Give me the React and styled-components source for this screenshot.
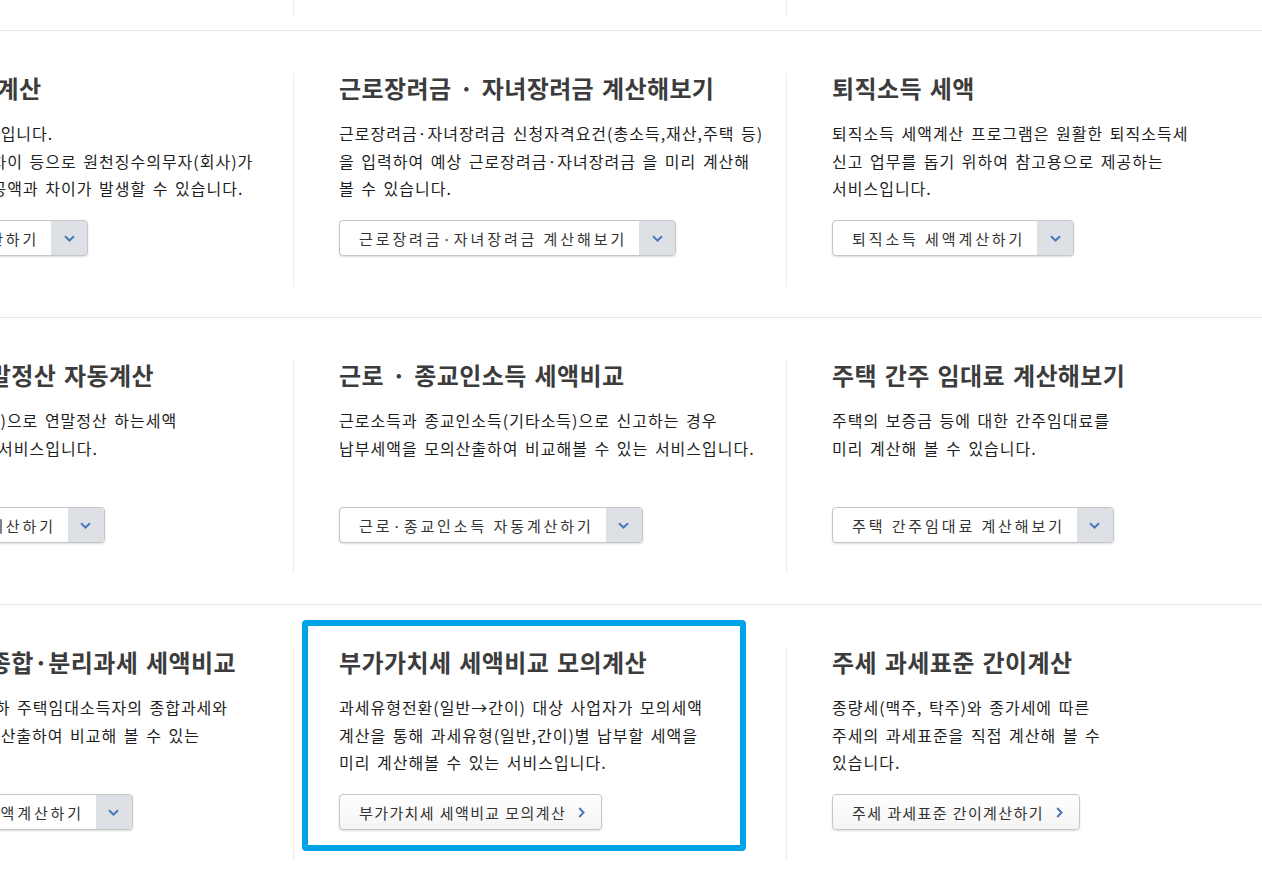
import React from 'react';
import styled, { createGlobalStyle } from 'styled-components';

const rows = [
  [
    {
      title: '원천징수 세액 계산',
      lines: [
        '세액 조회하는 서비스입니다.',
        '실제 부양가족 수의 차이 등으로 원천징수의무자(회사)가',
        '연말정산 시 결정된 공액과 차이가 발생할 수 있습니다.',
      ],
      button: '원천징수세액 계산하기',
      type: 'select',
    },
    {
      title: '근로장려금 · 자녀장려금 계산해보기',
      lines: [
        '근로장려금·자녀장려금 신청자격요건(총소득,재산,주택 등)',
        '을 입력하여 예상 근로장려금·자녀장려금 을 미리 계산해',
        '볼 수 있습니다.',
      ],
      button: '근로장려금·자녀장려금 계산해보기',
      type: 'select',
    },
    {
      title: '퇴직소득 세액',
      lines: [
        '퇴직소득 세액계산 프로그램은 원활한 퇴직소득세',
        '신고 업무를 돕기 위하여 참고용으로 제공하는',
        '서비스입니다.',
      ],
      button: '퇴직소득 세액계산하기',
      type: 'select',
    },
  ],
  [
    {
      title: '근로소득자 연말정산 자동계산',
      lines: [
        '입력 자료(간소화자료)으로 연말정산 하는세액',
        '을 계산해볼 수 있는 서비스입니다.',
      ],
      button: '근로소득자 자동계산하기',
      type: 'select',
    },
    {
      title: '근로 · 종교인소득 세액비교',
      lines: [
        '근로소득과 종교인소득(기타소득)으로 신고하는 경우',
        '납부세액을 모의산출하여 비교해볼 수 있는 서비스입니다.',
      ],
      button: '근로·종교인소득 자동계산하기',
      type: 'select',
    },
    {
      title: '주택 간주 임대료 계산해보기',
      lines: ['주택의 보증금 등에 대한 간주임대료를', '미리 계산해 볼 수 있습니다.'],
      button: '주택 간주임대료 계산해보기',
      type: 'select',
    },
  ],
  [
    {
      title: '주택임대소득 종합·분리과세 세액비교',
      lines: [
        '수입금액 2천만원 이하 주택임대소득자의 종합과세와',
        '분리과세 세액을 모의산출하여 비교해 볼 수 있는',
        '서비스입니다.',
      ],
      button: '종합·분리과세 세액계산하기',
      type: 'select',
    },
    {
      title: '부가가치세 세액비교 모의계산',
      lines: [
        '과세유형전환(일반→간이) 대상 사업자가 모의세액',
        '계산을 통해 과세유형(일반,간이)별 납부할 세액을',
        '미리 계산해볼 수 있는 서비스입니다.',
      ],
      button: '부가가치세 세액비교 모의계산',
      type: 'link',
      active: true,
    },
    {
      title: '주세 과세표준 간이계산',
      lines: [
        '종량세(맥주, 탁주)와 종가세에 따른',
        '주세의 과세표준을 직접 계산해 볼 수',
        '있습니다.',
      ],
      button: '주세 과세표준 간이계산하기',
      type: 'link',
    },
  ],
];

const ChevronDown = () => (
  <svg width="11" height="7" viewBox="0 0 11 7" fill="none">
    <path d="M1 1.2L5.5 5.5L10 1.2" stroke="#4a78b8" strokeWidth="2" />
  </svg>
);

const ChevronRight = () => (
  <svg width="7" height="11" viewBox="0 0 7 11" fill="none">
    <path d="M1.2 1L5.5 5.5L1.2 10" stroke="#4a78b8" strokeWidth="2" />
  </svg>
);

const Card = ({ item }) => (
  <Cell>
    {item.active && <Highlight />}
    <Title>{item.title}</Title>
    <Desc>
      {item.lines.map((line, i) => (
        <React.Fragment key={i}>
          {line}
          {i < item.lines.length - 1 && <br />}
        </React.Fragment>
      ))}
    </Desc>
    {item.type === 'select' ? (
      <Select>
        <SelectLabel>{item.button}</SelectLabel>
        <Toggle>
          <ChevronDown />
        </Toggle>
      </Select>
    ) : (
      <LinkButton>
        {item.button}
        <ChevronRight />
      </LinkButton>
    )}
  </Cell>
);

const App = () => (
  <Page>
    <GlobalStyle />
    <Board>
      <TailRow>
        <TailCell />
        <TailCell />
        <TailCell />
      </TailRow>
      {rows.map((row, r) => (
        <Row key={r}>
          {row.map((item, c) => (
            <Card key={c} item={item} />
          ))}
        </Row>
      ))}
    </Board>
  </Page>
);

const GlobalStyle = createGlobalStyle`
  body {
    margin: 0;
    background: #fff;
    overflow: hidden;
    font-family: "Noto Sans CJK KR", "Noto Sans", sans-serif;
    color: #222;
  }
`;

const Page = styled.div`
  width: 1262px;
  height: 881px;
  overflow: hidden;
`;

const Board = styled.div`
  margin-left: -200px;
  width: 1479px;
`;

const TailRow = styled.div`
  display: grid;
  grid-template-columns: repeat(3, 493px);
  height: 30px;
`;

const TailCell = styled.div`
  height: 16px;
  border-left: 1px solid #ececec;
`;

const Row = styled.div`
  display: grid;
  grid-template-columns: repeat(3, 493px);
  border-top: 1px solid #e6e6e6;
  padding: 42px 0 31px;
`;

const Cell = styled.div`
  position: relative;
  height: 213px;
  box-sizing: border-box;
  border-left: 1px solid #ececec;
  padding-left: 45px;
`;

const Highlight = styled.div`
  position: absolute;
  left: 8px;
  top: -27px;
  width: 444px;
  height: 231px;
  box-sizing: border-box;
  border: 6px solid #00a3e8;
  border-radius: 4px;
  pointer-events: none;
`;

const Title = styled.h3`
  margin: 0;
  font-size: 24px;
  line-height: 30px;
  font-weight: 700;
  letter-spacing: 0.4px;
  word-spacing: 2px;
  color: #3c3c3c;
  white-space: nowrap;
`;

const Desc = styled.p`
  margin: 17px 0 0;
  height: 83px;
  font-size: 16px;
  line-height: 27.5px;
  letter-spacing: 1px;
  word-spacing: 2px;
  color: #1e1e1e;
  white-space: nowrap;
`;

const Select = styled.div`
  display: inline-flex;
  margin-top: 17px;
  height: 36px;
  box-sizing: border-box;
  border: 1px solid #c6c6c6;
  border-radius: 4px;
  overflow: hidden;
  background: #fff;
  box-shadow: 0 1px 2px rgba(0, 0, 0, 0.14);
`;

const SelectLabel = styled.span`
  display: flex;
  align-items: center;
  padding: 0 12px 0 19px;
  font-size: 15px;
  letter-spacing: 2.9px;
  color: #333;
  white-space: nowrap;
`;

const Toggle = styled.span`
  display: flex;
  align-items: center;
  justify-content: center;
  width: 36px;
  background: #dde1e6;
`;

const LinkButton = styled.div`
  display: inline-flex;
  align-items: center;
  gap: 12px;
  margin-top: 17px;
  height: 36px;
  box-sizing: border-box;
  padding: 0 16px 0 19px;
  border: 1px solid #c6c6c6;
  border-radius: 4px;
  background: linear-gradient(#ffffff, #f4f4f4);
  box-shadow: 0 1px 2px rgba(0, 0, 0, 0.14);
  font-size: 15px;
  letter-spacing: 1.4px;
  color: #333;
  white-space: nowrap;
`;

export default App;
